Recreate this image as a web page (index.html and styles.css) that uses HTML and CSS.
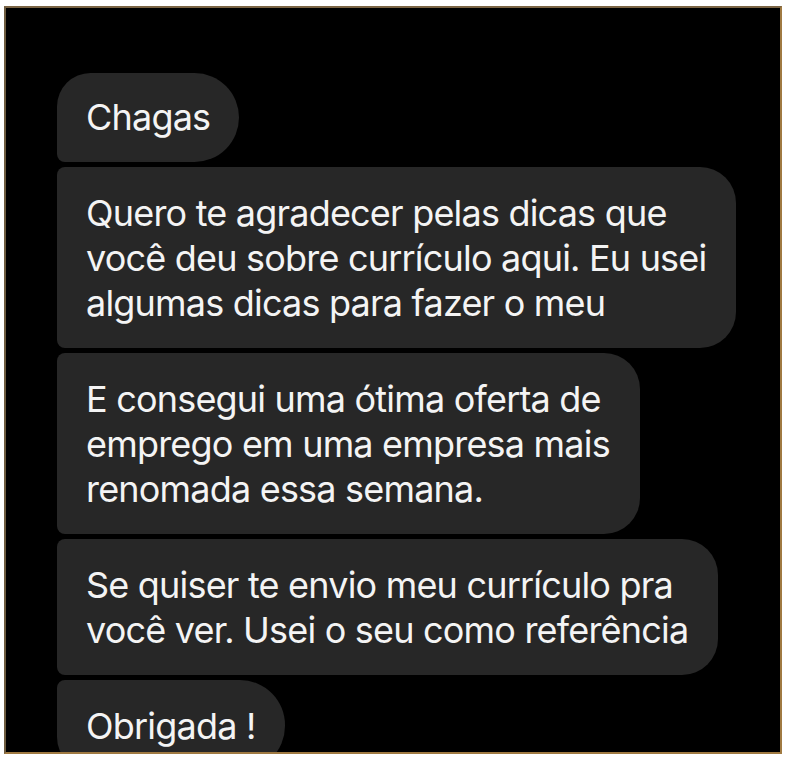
FILE: index.html
```html
<!DOCTYPE html>
<html lang="pt-BR">
<head>
    <meta charset="UTF-8">
    <meta name="viewport" content="width=device-width, initial-scale=1.0">
    <title>Mensagens</title>
    <link rel="stylesheet" href="styles.css">
</head>
<body>

<div class="frame">
    <div class="thread">
        <div class="bubble first">Chagas</div>
        <div class="bubble">Quero te agradecer pelas dicas que<br>você deu sobre currículo aqui. Eu usei<br>algumas dicas para fazer o meu</div>
        <div class="bubble">E consegui uma ótima oferta de<br>emprego em uma empresa mais<br>renomada essa semana.</div>
        <div class="bubble">Se quiser te envio meu currículo pra<br>você ver. Usei o seu como referência</div>
        <div class="bubble last">Obrigada !</div>
    </div>
</div>

</body>
</html>
```

FILE: styles.css
```css
body {
    margin: 0;
    background-color: #fff;
    font-family: Inter, "Noto Sans", sans-serif;
}
.frame {
    margin: 6px 4px 0 4px;
    height: 744px;
    background-color: #000;
    border: 2px solid #a07a42;
    border-top-color: #7a6444;
    border-left-color: #6e5c40;
    overflow: hidden;
}
.thread {
    display: flex;
    flex-direction: column;
    align-items: flex-start;
    gap: 5px;
    padding: 65px 0 0 51px;
}
.bubble {
    background-color: #272727;
    color: #f4f4f4;
    font-size: 36px;
    letter-spacing: -0.8px;
    line-height: 45px;
    padding: 24px 30px 22px 29px;
    border-radius: 8px 36px 36px 8px;
    white-space: nowrap;
}
.bubble.first {
    padding: 22px 29px 22px 29px;
    border-radius: 34px 45px 45px 8px;
}
.bubble.last {
    border-radius: 8px 45px 45px 34px;
}
```
